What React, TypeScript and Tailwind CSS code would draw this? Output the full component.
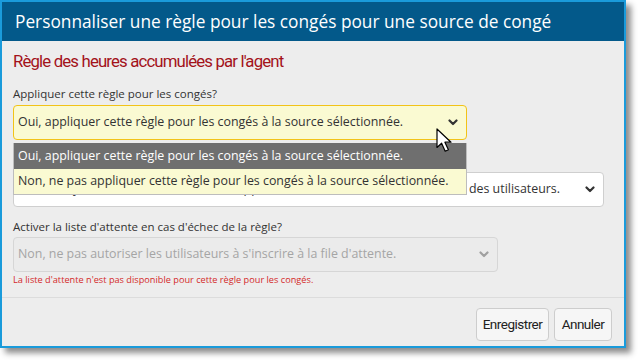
import React from 'react';

const font = { fontFamily: '"Open Sans", "Noto Sans", sans-serif' };
const narrow = { fontFamily: 'Roboto, "Open Sans", sans-serif' };

const Chevron = ({ color = '#333' }: { color?: string }) => (
  <svg width="10" height="7" viewBox="0 0 10 7" className="shrink-0">
    <polyline points="1.5,1.5 5,5 8.5,1.5" fill="none" stroke={color} strokeWidth="2.2" strokeLinecap="round" strokeLinejoin="round" />
  </svg>
);

const Cursor = () => (
  <svg width="17" height="26" viewBox="0 0 17 26" className="absolute left-[434px] top-[126px]">
    <path d="M1 1 L1 19.5 L5.6 15.2 L9.2 23.2 L12.4 21.8 L8.9 14.2 L15 14.2 Z" fill="#fff" stroke="#000" strokeWidth="1.2" strokeLinejoin="round" />
  </svg>
);

export default function App() {
  return (
    <div className="w-[638px] h-[362px] bg-white overflow-hidden" style={font}>
      <div className="relative w-[626px] h-[348px] border-2 border-[#1a9bdb] bg-[#ededed] shadow-[5px_5px_6px_rgba(0,0,0,0.45)] flex flex-col">
        <div className="h-[39px] bg-[#03598a] px-[13px] flex items-center">
          <h1 className="text-white text-[17.3px] leading-none">
            Personnaliser une règle pour les congés pour une source de congé
          </h1>
        </div>

        <div className="flex-1 flex flex-col pl-[11px] pr-[20px]">
          <h2 className="mt-[8px] text-[#a3121a] text-[16.8px] leading-[24px] tracking-[-0.85px]" style={narrow}>
            Règle des heures accumulées par l'agent
          </h2>

          <label className="mt-[13px] block text-[#333] text-[11.5px] leading-[16px]">
            Appliquer cette règle pour les congés?
          </label>
          <div className="mt-[3px] w-[454px] h-[35px] rounded-[4px] border border-[#f2c318] bg-[#fafad2] flex items-center justify-between pl-[4px] pr-[8px]">
            <span className="text-[#333] text-[12.4px]">
              Oui, appliquer cette règle pour les congés à la source sélectionnée.
            </span>
            <Chevron />
          </div>

          <div className="mt-[32px] w-[591px] h-[35px] rounded-[4px] border border-[#cfcfcf] bg-white flex items-center justify-between pl-[4px] pr-[8px]">
            <span className="text-[#333] text-[12.4px] whitespace-nowrap">
              Oui, envoyer une notification lors de l'approbation ou du refus des demandes des utilisateurs.
            </span>
            <Chevron />
          </div>

          <label className="mt-[12px] block text-[#333] text-[11.5px] leading-[16px]">
            Activer la liste d'attente en cas d'échec de la règle?
          </label>
          <div className="mt-[2px] w-[485px] h-[35px] rounded-[4px] border border-[#d6d6d6] bg-[#ebebeb] flex items-center justify-between pl-[4px] pr-[8px]">
            <span className="text-[#a5a5a5] text-[12.4px]">
              Non, ne pas autoriser les utilisateurs à s'inscrire à la file d'attente.
            </span>
            <Chevron color="#a0a0a0" />
          </div>
          <p className="mt-[1px] text-[#d42a2a] text-[9.2px] leading-[14px]">
            La liste d'attente n'est pas disponible pour cette règle pour les congés.
          </p>
        </div>

        <div className="h-[49px] border-t border-[#dcdcdc] flex items-start justify-end gap-[5px] pt-[10px] pr-[12px]">
          <button className="w-[73px] h-[33px] rounded-[4px] border border-[#cdcdcd] bg-[#f6f6f6] text-[#222] text-[13.5px] tracking-[-0.5px]" style={narrow}>
            Enregistrer
          </button>
          <button className="w-[58px] h-[33px] rounded-[4px] border border-[#cdcdcd] bg-[#f6f6f6] text-[#222] text-[13.5px] tracking-[-0.5px]" style={narrow}>
            Annuler
          </button>
        </div>

        <div className="absolute left-[11px] top-[141px] w-[454px] border border-[#bdbdbd] border-t-0 flex flex-col">
          <div className="h-[26px] bg-[#6f6f6f] text-white text-[12.4px] whitespace-nowrap flex items-center pl-[4px]">
            Oui, appliquer cette règle pour les congés à la source sélectionnée.
          </div>
          <div className="h-[25px] bg-[#fafad2] text-[#333] text-[12.4px] whitespace-nowrap flex items-center pl-[4px]">
            Non, ne pas appliquer cette règle pour les congés à la source sélectionnée.
          </div>
        </div>

        <Cursor />
      </div>
    </div>
  );
}
